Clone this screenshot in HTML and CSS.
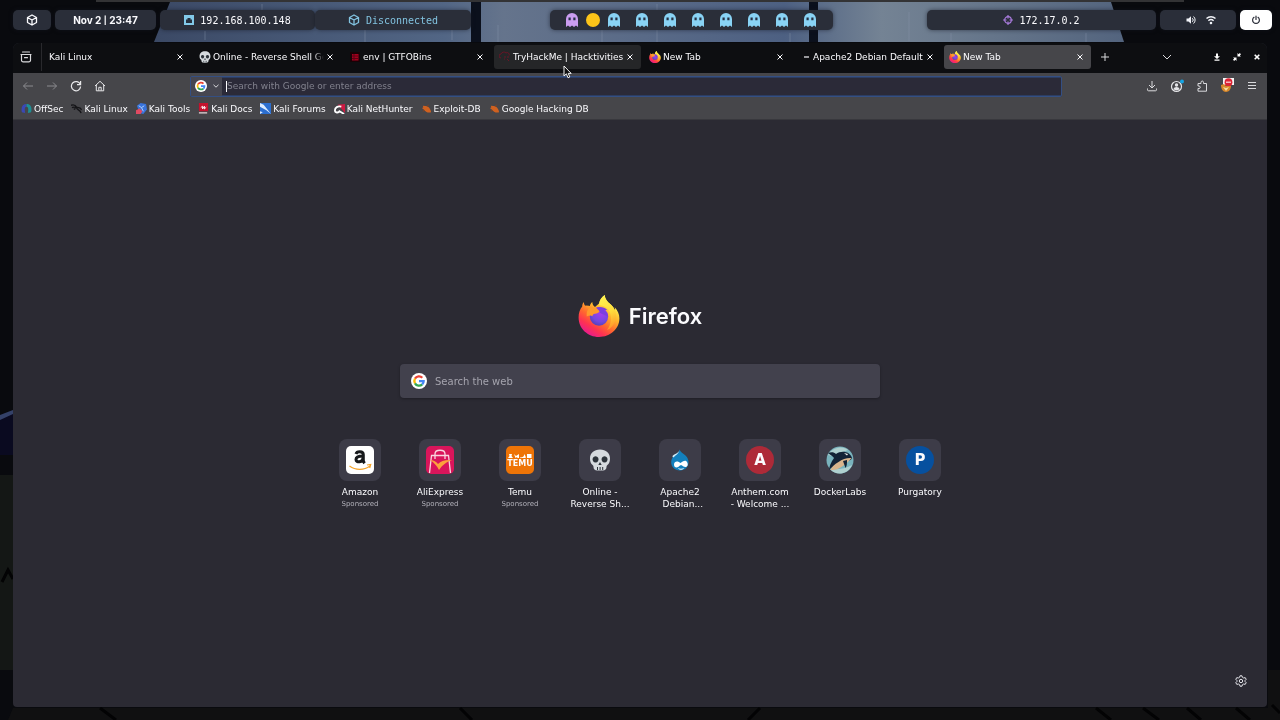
FILE: index.html
```html
<!DOCTYPE html>
<html lang="en">
<head>
  <meta charset="UTF-8">
  <meta name="viewport" content="width=device-width, initial-scale=1.0">
  <title>New Tab</title>
  <link rel="stylesheet" href="styles.css">
</head>
<body>
  <!-- Shared icons -->
  <svg class="sprite" width="0" height="0" aria-hidden="true">
    <defs>
      <linearGradient id="foxBody" x1="0.8" y1="0.1" x2="0.25" y2="0.95">
        <stop offset="0.1" stop-color="#fff14f"></stop>
        <stop offset="0.35" stop-color="#ffb52c"></stop>
        <stop offset="0.6" stop-color="#ff6a2e"></stop>
        <stop offset="0.8" stop-color="#ff3350"></stop>
        <stop offset="1" stop-color="#e81c8c"></stop>
      </linearGradient>
      <linearGradient id="foxFlame" x1="0.4" y1="0" x2="0.6" y2="1">
        <stop offset="0" stop-color="#fff251"></stop>
        <stop offset="0.5" stop-color="#ffdd3c"></stop>
        <stop offset="1" stop-color="#ff9428"></stop>
      </linearGradient>
      <radialGradient id="foxGlobe" cx="0.6" cy="0.3" r="0.8">
        <stop offset="0" stop-color="#a83cf0"></stop>
        <stop offset="0.6" stop-color="#7548e0"></stop>
        <stop offset="1" stop-color="#4b3fae"></stop>
      </radialGradient>
    </defs>
    <symbol id="firefox" viewBox="0 0 42 42">
      <path fill="url(#foxBody)" d="M5.7 7c.2 1.500.6 2.700 1.500 3.800 1.600-.3 3.200-.2 4.600.3.4-1.700 1.200-3 2.500-4 .1 2.300 1 3.800 2.700 5l4-3.500C21.600 5 23.600 2 26.700 0c.3 4 2.300 6.500 5.800 9.200 2.200 1.700 3.700 4 4.500 6.500.2-1.200.1-2.200-.3-3.400 3 3.300 4.700 7 4.700 11C41.400 34 32.300 42 21 42S.6 33.500.6 22.500c0-4.500 1.200-8 3.600-11C4.200 9.800 4.800 8.300 5.700 7z"></path>
      <path fill="url(#foxFlame)" d="M26.700 0c.3 4 2.300 6.500 5.800 9.200 5 4.300 6.500 9.500 5 15.500-1.300 5-4 8.500-8.500 10.300 4.700-6 5.500-14 1.500-20.500-2.500-3-6-4-9.500-4.500C21.300 5.700 23.500 2.300 26.700 0z"></path>
      <circle cx="21" cy="21.500" r="9.200" fill="url(#foxGlobe)"></circle>
      <path fill="#ff9a2c" d="M7.200 10.800c2.200-.4 4.300 0 6 .9 1.800.9 3.700 1 5.600.8.9 1.700 1.800 2.700 3 3.700-1.200 1.500-2.700 2.300-4.800 2.600-1.700.3-2.400 1-2.500 2.400-1.300-.9-3.300-1.100-5.800.3-.3-4 .3-6.300 2.700-8.400-1.600-.2-3-.9-4.200-2.300z"></path>
      <path fill="#7b3fdf" d="M18 12.800c3.600-1.600 8.700-.7 11.500 2.400-1.400-.4-2.500-.4-3.500 0 2.600 1.700 4 3.500 4 6.300l-8-3.500-.6-2.200z"></path>
    </symbol>
    <symbol id="google" viewBox="0 0 18 18">
      <circle cx="9" cy="9" r="9" fill="#fff"></circle>
      <g fill="none" stroke-width="2.600">
        <path stroke="#ea4335" d="M4.500 6.400A5.200 5.200 0 0 1 12.700 5.300"></path>
        <path stroke="#fbbc05" d="M4.500 11.600A5.200 5.200 0 0 1 4.500 6.400"></path>
        <path stroke="#34a853" d="M12.600 12.800A5.200 5.200 0 0 1 4.500 11.600"></path>
        <path stroke="#4285f4" d="M9 9.200h5.200c0 1.500-.6 2.700-1.600 3.600"></path>
      </g>
    </symbol>
    <symbol id="ghost" viewBox="0 0 12 14">
      <path fill="currentColor" d="M0 6a6 6 0 0 1 12 0v8l-2-1.600L8 14l-2-1.600L4 14l-2-1.600L0 14z"></path>
      <path fill="#263043" d="M2.500 4.500h2.200v2.700H2.500zM7.300 4.500h2.200v2.700H7.300z"></path>
    </symbol>
    <symbol id="skull" viewBox="0 0 22 22">
      <path fill="#d5dade" d="M11 .5c6 0 10 3.700 10 9 0 3-.8 5-2.300 6.200-.8.700-1.200 1-1.200 2.300 0 2-1.400 3.500-3.500 3.500H8c-2.100 0-3.500-1.500-3.500-3.500 0-1.300-.4-1.600-1.200-2.300C1.800 14.500 1 12.500 1 9.500c0-5.300 4-9 10-9z"></path>
      <path fill="#2c333a" d="M6.500 7.200a3 3.200 0 1 0 .1 0zM15.500 7.200a3 3.200 0 1 0 .1 0zM11 13l1.700 3h-3.400zM8 18h1v3H8zM10.600 18h1v3h-1zM13.200 18h1v3h-1z"></path>
    </symbol>
    <symbol id="cube" viewBox="0 0 12 12">
      <path fill="none" stroke="currentColor" stroke-width="1.300" stroke-linejoin="round" d="M6 1l4.500 2.500v5L6 11 1.500 8.500v-5zM1.500 3.500L6 6l4.500-2.500M6 6v5"></path>
    </symbol>
    <symbol id="close" viewBox="0 0 8 8">
      <path fill="none" stroke="currentColor" d="M1.500 1.500l5 5M6.500 1.500l-5 5"></path>
    </symbol>
    <symbol id="exploit" viewBox="0 0 12 12">
      <path fill="#cf6120" d="M2 3l3 .3C8 3.500 10.500 6 11 10c-3 1-6 0-8-3L1 5.500l1.500-.6z"></path>
      <path stroke="#8d4017" fill="none" d="M4 8l-2 1M7 4l1-2"></path>
    </symbol>
  </svg>

  <!-- Wallpaper showing behind the bar and round the window -->
  <svg class="wallpaper" viewBox="0 0 1280 720" preserveAspectRatio="none" aria-hidden="true">
    <defs>
      <linearGradient id="sky" x1="0" x2="1">
        <stop offset="0" stop-color="#3b4965"></stop>
        <stop offset="0.3" stop-color="#526685"></stop>
        <stop offset="0.36" stop-color="#65748c"></stop>
        <stop offset="0.65" stop-color="#4d6082"></stop>
        <stop offset="0.75" stop-color="#748394"></stop>
        <stop offset="1" stop-color="#53647e"></stop>
      </linearGradient>
    </defs>
    <path fill="#090a0e" d="M0 0h1280v720H0z"></path>
    <path fill="#333335" d="M96 0h1088v2H96z"></path>
    <path fill="url(#sky)" d="M170 2h941l13 40H154z"></path>
    <path fill="#0b101c" d="M471 2h10v40h-10zM809 2h9v40h-9z"></path>
    <path stroke="#8795a8" stroke-opacity="0.45" d="M205 31v9M262 4v6M365 30v12M452 26v14M498 25v17M602 30v12M657 4v38M790 33v9M909 12v29M951 33v8M1086 33v9"></path>
    <path fill="#0a0a20" d="M0 418l13-5v42H0z"></path>
    <path fill="#344168" d="M0 415l13-5v4L0 420z"></path>
    <path fill="#141715" d="M0 475h13v195H0z"></path>
    <path fill="#101011" d="M13 708h1267v12H8zM1268 670h12v50h-12z"></path>
    <path stroke="#030304" stroke-width="3" fill="none" d="M2 582l6-12 5 9M100 708l16 12M460 708l12 12M760 708l-12 12M1096 708l15 12M1143 708l16 12M1187 708l14 12M1236 708l14 12M1272 705l8 8"></path>
  </svg>

  <div class="desktop">
    <div class="bar">
      <div class="bar-left">
        <button class="pill pill-menu" aria-label="Menu"><svg width="12" height="12"><use href="#cube"></use></svg></button>
        <div class="pill pill-clock">Nov 2 <span>|</span> 23:47</div>
        <div class="network">
          <div class="pill pill-ip">
            <svg width="10" height="10" viewBox="0 0 10 10">
              <path fill="#82c9e8" d="M0 0h10v10H0z"></path>
              <path fill="#26313f" d="M2 8V4.500h1.500V3h3v1.500H8V8z"></path>
            </svg>
            <span>192.168.100.148</span>
          </div>
          <div class="pill pill-vpn">
            <svg width="12" height="12"><use href="#cube"></use></svg>
            <span>Disconnected</span>
          </div>
        </div>
      </div>

      <div class="pill workspaces">
        <button class="ghost current" aria-label="Workspace 1"><svg width="12" height="14"><use href="#ghost"></use></svg></button>
        <span class="dot"></span>
        <button class="ghost" aria-label="Workspace 2"><svg width="12" height="14"><use href="#ghost"></use></svg></button>
        <button class="ghost" aria-label="Workspace 3"><svg width="12" height="14"><use href="#ghost"></use></svg></button>
        <button class="ghost" aria-label="Workspace 4"><svg width="12" height="14"><use href="#ghost"></use></svg></button>
        <button class="ghost" aria-label="Workspace 5"><svg width="12" height="14"><use href="#ghost"></use></svg></button>
        <button class="ghost" aria-label="Workspace 6"><svg width="12" height="14"><use href="#ghost"></use></svg></button>
        <button class="ghost" aria-label="Workspace 7"><svg width="12" height="14"><use href="#ghost"></use></svg></button>
        <button class="ghost" aria-label="Workspace 8"><svg width="12" height="14"><use href="#ghost"></use></svg></button>
        <button class="ghost" aria-label="Workspace 9"><svg width="12" height="14"><use href="#ghost"></use></svg></button>
      </div>

      <div class="bar-right">
        <div class="pill pill-target">
          <svg width="10" height="10" viewBox="0 0 10 10" fill="none" stroke="#a87bdc" stroke-width="1.200">
            <circle cx="5" cy="5" r="3.300"></circle>
            <path d="M5 0v3.500M5 6.500V10M0 5h3.500M6.500 5H10"></path>
          </svg>
          <span>172.17.0.2</span>
        </div>
        <div class="pill pill-tray">
          <svg width="10" height="10" viewBox="0 0 10 10" fill="none" stroke="#f1f3f8">
            <path fill="#f1f3f8" stroke="none" d="M.5 3.500h2L5 1.200v7.600L2.500 6.500h-2z"></path>
            <path d="M6.300 3.200a2.400 2.400 0 0 1 0 3.600M7.500 1.500a4.600 4.600 0 0 1 0 7"></path>
          </svg>
          <svg width="10" height="10" viewBox="0 0 10 10" fill="none" stroke="#f1f3f8" stroke-width="1.400">
            <path d="M.5 3.500a6.500 6.500 0 0 1 9 0M2.400 5.700a3.800 3.800 0 0 1 5.200 0"></path>
            <circle cx="5" cy="8" r="0.600"></circle>
          </svg>
        </div>
        <button class="pill pill-power" aria-label="Power">
          <svg width="10" height="10" viewBox="0 0 10 10" fill="none" stroke="#2a2d38" stroke-width="1.200" stroke-linecap="round">
            <path d="M5 1v3.500M3 2.300a3.400 3.400 0 1 0 4 0"></path>
          </svg>
        </button>
      </div>
    </div>

    <div class="window">
      <div class="tab-strip">
        <button class="firefox-view" aria-label="Firefox View">
          <svg width="12" height="12" viewBox="0 0 12 12" fill="none" stroke="#dadadd" stroke-width="1.200" stroke-linecap="round">
            <path d="M2.500 1h7"></path>
            <path d="M1 3.500h10M1.500 3.500v5.800c0 .9.500 1.500 1.500 1.500h6c1 0 1.500-.6 1.500-1.500V3.500M4.500 6.700h3"></path>
          </svg>
        </button>
        <div class="tabs">
          <div class="tab">
            <span class="tab-label">Kali Linux</span>
            <button class="tab-close" aria-label="Close tab"><svg width="8" height="8"><use href="#close"></use></svg></button>
          </div>
          <div class="tab">
            <svg class="favicon" width="12" height="12"><use href="#skull"></use></svg>
            <span class="tab-label fade">Online - Reverse Shell Ge</span>
            <button class="tab-close" aria-label="Close tab"><svg width="8" height="8"><use href="#close"></use></svg></button>
          </div>
          <div class="tab">
            <svg class="favicon" width="12" height="12" viewBox="0 0 12 12">
              <path fill="#180206" d="M1 1h10v10H1z"></path>
              <path fill="#a5001e" d="M3 3h6.500v6.500H3z"></path>
              <path stroke="#5d0012" d="M3 5h6M3 7.500h6M5 3v6"></path>
            </svg>
            <span class="tab-label">env | GTFOBins</span>
            <button class="tab-close" aria-label="Close tab"><svg width="8" height="8"><use href="#close"></use></svg></button>
          </div>
          <div class="tab hovered">
            <svg class="favicon" width="12" height="12" viewBox="0 0 12 12" fill="none" stroke="#6b1426">
              <path d="M2 7a2 2 0 0 1 0-4 3 3 0 0 1 5-1 2 2 0 0 1 3 2.500M5 6h2M8 6h2M5 8h1M8 8l2 2"></path>
            </svg>
            <span class="tab-label">TryHackMe | Hacktivities</span>
            <button class="tab-close" aria-label="Close tab"><svg width="8" height="8"><use href="#close"></use></svg></button>
          </div>
          <div class="tab">
            <svg class="favicon" width="12" height="12"><use href="#firefox"></use></svg>
            <span class="tab-label">New Tab</span>
            <button class="tab-close" aria-label="Close tab"><svg width="8" height="8"><use href="#close"></use></svg></button>
          </div>
          <div class="tab">
            <svg class="favicon" width="12" height="12" viewBox="0 0 12 12"><path fill="#98989c" d="M5 5h5v2H5z"></path></svg>
            <span class="tab-label">Apache2 Debian Default</span>
            <button class="tab-close" aria-label="Close tab"><svg width="8" height="8"><use href="#close"></use></svg></button>
          </div>
          <div class="tab active">
            <svg class="favicon" width="12" height="12"><use href="#firefox"></use></svg>
            <span class="tab-label">New Tab</span>
            <button class="tab-close" aria-label="Close tab"><svg width="8" height="8"><use href="#close"></use></svg></button>
          </div>
        </div>
        <button class="new-tab" aria-label="New tab">
          <svg width="10" height="10" viewBox="0 0 10 10" stroke="#dadadd"><path d="M5 1v8M1 5h8"></path></svg>
        </button>
        <div class="window-controls">
          <button class="all-tabs" aria-label="List all tabs">
            <svg width="10" height="10" viewBox="0 0 10 10" fill="none" stroke="#dadadd"><path d="M1 3l4 4 4-4"></path></svg>
          </button>
          <button aria-label="Minimize">
            <svg width="8" height="8" viewBox="0 0 8 8"><path fill="#fff" d="M3 .5h2v2.700h2L4 6 1 3.200h2zM1.500 6.500h5v1.200h-5z"></path></svg>
          </button>
          <button aria-label="Restore">
            <svg width="8" height="8" viewBox="0 0 8 8"><path fill="#fff" d="M4.500 0v3.500H8L6.800 2.400 8 1.200 6.800 0 5.700 1.200zM3.500 8V4.500H0l1.200 1.100L0 6.800 1.200 8l1.100-1.200z"></path></svg>
          </button>
          <button aria-label="Close window">
            <svg width="8" height="8" viewBox="0 0 8 8" stroke="#fff" stroke-width="1.600"><path d="M1.700 1.700l4.600 4.600M6.300 1.700L1.700 6.300"></path></svg>
          </button>
        </div>
      </div>

      <div class="toolbar">
        <div class="nav-buttons">
          <button aria-label="Back" disabled>
            <svg width="12" height="12" viewBox="0 0 12 12" fill="none" stroke="#8b8b8f"><path d="M11 6H1.500M5 2.500L1.500 6 5 9.500"></path></svg>
          </button>
          <button aria-label="Forward" disabled>
            <svg width="12" height="12" viewBox="0 0 12 12" fill="none" stroke="#8b8b8f"><path d="M1 6h9.500M7 2.500L10.500 6 7 9.500"></path></svg>
          </button>
          <button aria-label="Reload">
            <svg width="12" height="12" viewBox="0 0 12 12" fill="none" stroke="#e8e8ea" stroke-width="1.200"><path d="M10.300 4.500A4.600 4.600 0 1 0 10.600 6.500M10.600 1v3.700H7"></path></svg>
          </button>
          <button aria-label="Home">
            <svg width="12" height="12" viewBox="0 0 12 12" fill="none" stroke="#e8e8ea" stroke-linejoin="round"><path d="M1 6l5-4.700L11 6M2.300 5v5.800h7.400V5M4.800 10.500V7.300h2.400v3.200"></path></svg>
          </button>
        </div>
        <div class="urlbar">
          <button class="engine" aria-label="Search engine: Google">
            <svg width="12" height="12"><use href="#google"></use></svg>
            <svg width="6" height="6" viewBox="0 0 6 6" fill="none" stroke="#dadadd"><path d="M.5 1.800L3 4.200l2.500-2.400"></path></svg>
          </button>
          <div class="url-field">
            <span class="caret"></span>
            <input type="text" aria-label="Address" placeholder="Search with Google or enter address">
          </div>
        </div>
        <div class="tool-buttons">
          <button aria-label="Downloads">
            <svg width="12" height="12" viewBox="0 0 12 12" fill="none" stroke="#dadadd"><path d="M6 1v7M3 5l3 3 3-3M1.500 8.500v1.300c0 .6.300 1 1 1h7c.7 0 1-.4 1-1V8.500"></path></svg>
          </button>
          <button aria-label="Account">
            <svg width="14" height="14" viewBox="0 0 14 14">
              <circle cx="6.500" cy="7.500" r="5" fill="none" stroke="#e4e4e7" stroke-width="1.200"></circle>
              <circle cx="6.500" cy="6" r="1.700" fill="#e4e4e7"></circle>
              <path fill="#e4e4e7" d="M3.500 10.300c.3-3.200 5.700-3.200 6 0-1.600 1.500-4.400 1.500-6 0z"></path>
              <circle cx="12" cy="2.500" r="2" fill="#15a5e5"></circle>
            </svg>
          </button>
          <button aria-label="Extensions">
            <svg width="12" height="12" viewBox="0 0 12 12" fill="none" stroke="#dadadd" stroke-linejoin="round"><path d="M2 11.200V8.500h1c1.800 0 1.800-2.500 0-2.500H2V3.500h3V2.300c0-1.700 2.500-1.700 2.500 0v1.200h3v7.700z"></path></svg>
          </button>
          <button aria-label="FoxyProxy">
            <svg width="14" height="16" viewBox="0 0 14 16">
              <path fill="#f5f5f5" d="M3 0h11v7H3z"></path>
              <path fill="#d8872a" d="M1 7l3-1 2 2 3-2 2 2c0 3-2 6-5 6S1 11 1 7z"></path>
              <path fill="#f7dd9b" d="M3 9l3 1 3-1-3 4z"></path>
              <circle cx="8.500" cy="4.200" r="3.900" fill="#dc2434"></circle>
              <path stroke="#f5b8bc" stroke-width="1.500" d="M6 4.200h5"></path>
            </svg>
          </button>
          <button aria-label="Application menu">
            <svg width="12" height="12" viewBox="0 0 12 12" stroke="#dadadd"><path d="M2 2.500h8M2 5.500h8M2 8.500h8"></path></svg>
          </button>
        </div>
      </div>

      <nav class="bookmarks">
        <a href="#">
          <svg width="11" height="11" viewBox="0 0 12 12"><path fill="#3a48b5" d="M1 10C-.5 4 2 1 6 1v3C3.500 4 4 8 4.500 11z"></path><path fill="#1d8f94" d="M11 10c1.500-6-1-9-5-9v3c2.500 0 2 4 1.500 7z"></path></svg>
          OffSec
        </a>
        <a href="#">
          <svg width="11" height="11" viewBox="0 0 12 12" fill="none" stroke="#151518" stroke-width="1.500"><path d="M0 2.500c3-1 5 0 6 2l4 1 1.500 2M1 5c2-1 3-.5 5 0 0 3 4 2 5 6M3 7l2-1"></path></svg>
          Kali Linux
        </a>
        <a href="#">
          <svg width="11" height="11" viewBox="0 0 12 12"><path fill="#3873db" d="M1 3l4-3 6 1 1 6-4 5-4-1z"></path><path fill="#e04a62" d="M0 8l4-2 3 3-2 3H0z"></path><path stroke="#b9d5ff" fill="none" d="M3 3l3 2 3-2M6 5l2 4"></path></svg>
          Kali Tools
        </a>
        <a href="#">
          <svg width="11" height="11" viewBox="0 0 12 12"><path fill="#c4122d" d="M1 0h10v9H1z"></path><path fill="#e9d7da" d="M1 10h9v1.500H1z"></path><path stroke="#fff" fill="none" d="M3 5l2-1.500v3l2-3v3L9 4.500"></path></svg>
          Kali Docs
        </a>
        <a href="#">
          <svg width="11" height="11" viewBox="0 0 12 12"><path fill="#2c6fd0" d="M0 0h12v12H0z"></path><path fill="#dcebff" d="M0 0l4 2 8 10-5-4L0 4zM0 9l3 1-3 2z"></path></svg>
          Kali Forums
        </a>
        <a href="#">
          <svg width="11" height="11" viewBox="0 0 12 12"><path fill="#cd1942" d="M4 2l8-1v10L7 5z"></path><path fill="none" stroke="#fff" stroke-width="2" d="M8 4C4 3 1 5 1 8c0 3 4 3 5 1l5 3"></path></svg>
          Kali NetHunter
        </a>
        <a href="#"><svg width="11" height="11"><use href="#exploit"></use></svg>Exploit-DB</a>
        <a href="#"><svg width="11" height="11"><use href="#exploit"></use></svg>Google Hacking DB</a>
      </nav>

      <main class="newtab">
        <div class="brand">
          <svg width="42" height="42"><use href="#firefox"></use></svg>
          <span>Firefox</span>
        </div>

        <form class="search">
          <svg width="16" height="16"><use href="#google"></use></svg>
          <input type="search" aria-label="Search the web" placeholder="Search the web">
        </form>

        <div class="top-sites">
          <a class="site" href="#">
            <span class="tile">
              <svg width="28" height="28" viewBox="0 0 28 28">
                <rect width="28" height="28" rx="5" fill="#fff"></rect>
                <path fill="none" stroke="#17191c" stroke-width="3" d="M10 8c.8-3 7.300-3.200 7.300.7v5.500c0 1.300.5 2 1.300 3M17 9.900c-4.300 0-7 1-7 3.600 0 3.600 7 3 7-1.500"></path>
                <path fill="none" stroke="#f5a327" stroke-width="1.200" d="M3.500 20c6 4.500 14.500 4.500 20.500 0M21 19l3.700-.5-1 3.500"></path>
              </svg>
            </span>
            <span class="site-name">Amazon</span>
            <span class="sponsored">Sponsored</span>
          </a>
          <a class="site" href="#">
            <span class="tile">
              <svg width="28" height="28" viewBox="0 0 28 28">
                <rect width="28" height="28" rx="5" fill="#d9155b"></rect>
                <path fill="none" stroke="#f9d5df" stroke-width="1.300" d="M3.500 27l2-17.500h17l2 17.500M9 13V8c0-5 10-5 10 0v5"></path>
                <path fill="#fca33b" d="M4 14c3 0 6 1.500 8 4 3-3 7-4.500 14-4-6 2-9.500 5-13 10-2-4-5-7.500-9-10z"></path>
              </svg>
            </span>
            <span class="site-name">AliExpress</span>
            <span class="sponsored">Sponsored</span>
          </a>
          <a class="site" href="#">
            <span class="tile">
              <span class="letter-icon temu">
                <svg width="24" height="6" viewBox="0 0 24 6" fill="#fff"><path d="M0 5l1.500-2L1 1h3l-.5 2L5 5zM6 1l2 2 3-2v4H9.500L9 4 7.500 5zM12 4.500c3 0 4-1 4.500-3.500L18 4.500 17 5h-5zM19 1h4.500v4H19z"></path></svg>
                TEMU
              </span>
            </span>
            <span class="site-name">Temu</span>
            <span class="sponsored">Sponsored</span>
          </a>
          <a class="site" href="#">
            <span class="tile"><svg width="22" height="22"><use href="#skull"></use></svg></span>
            <span class="site-name">Online -<br>Reverse Sh...</span>
          </a>
          <a class="site" href="#">
            <span class="tile">
              <svg width="22" height="22" viewBox="0 0 22 22">
                <path fill="#1380bd" d="M10.500.5c1 3 3.500 3.500 6 6 6 6 2.500 15-5.500 15S-.5 13.500 4.500 7C7 4.500 10 4 10.500.5z"></path>
                <path fill="#d9f0fb" d="M10 2c-.5 3-3.500 4-5.500 6.500L3.300 7.200C5 5 9 4.500 10 2z"></path>
                <path fill="#fff" d="M5 15.500c0-3.500 4-4 6.500-1.500 2-1.500 5-3.500 6.500-1s.5 5-1.500 5c-2 0-3-1.500-4.500-2-2 1-3 2.500-4.500 2.500S5 17.500 5 15.500z"></path>
                <path fill="none" stroke="#fff" d="M9.500 19.500c1.500 1 3.500 1 5 0"></path>
              </svg>
            </span>
            <span class="site-name">Apache2<br>&nbsp;&nbsp;Debian...</span>
          </a>
          <a class="site" href="#">
            <span class="tile"><span class="letter-icon red">A</span></span>
            <span class="site-name">Anthem.com<br>- Welcome ...</span>
          </a>
          <a class="site" href="#">
            <span class="tile">
              <svg width="28" height="28" viewBox="0 0 28 28">
                <circle cx="14" cy="14" r="13.500" fill="#79b3bd"></circle>
                <path fill="#afd0cf" d="M2 9c5-9 16-9 20-5L6 10zM4 23c7 1 15 0 22-4-4 10-17 11-22 4z"></path>
                <path fill="#132336" d="M2 7c3-1 6-1 8 1 5-4 14-3 16 4-1 3-5 3-7 2l1 6-4-4c-4 2-8 3-13 8 1-6 3-9 5-12-1-2-4-3-6-5z"></path>
                <path fill="#d8b48c" d="M25.500 12c-4-.5-9 1-13 4-4 2-7 5-8 8 7 1 15-5 21-12z"></path>
                <path fill="#f3f3ed" d="M18 7l4 1-1 1.500z"></path>
                <path fill="#132336" d="M17 15l4-1c0 3 0 6-1.500 8z"></path>
              </svg>
            </span>
            <span class="site-name">DockerLabs</span>
          </a>
          <a class="site" href="#">
            <span class="tile"><span class="letter-icon blue">P</span></span>
            <span class="site-name">Purgatory</span>
          </a>
        </div>

        <button class="settings" aria-label="Personalize new tab">
          <svg width="12" height="12" viewBox="0 0 12 12" fill="none" stroke="#e4e4ea" stroke-linejoin="round">
            <path d="M5 .8h2l.4 1.500 1.300.7 1.500-.4 1 1.700L10.100 5.400v1.200l1.100 1.100-1 1.700-1.500-.4-1.300.7L7 11.200H5l-.4-1.500L3.300 9l-1.500.4-1-1.700 1.100-1.100V5.400L.8 4.300l1-1.700 1.500.4 1.300-.7z"></path>
            <circle cx="6" cy="6" r="1.700"></circle>
          </svg>
        </button>
      </main>
    </div>
  </div>

  <!-- Mouse pointer -->
  <svg class="pointer" width="9" height="14" viewBox="0 0 9 14" aria-hidden="true">
    <path fill="#111" stroke="#f2f2f2" d="M1 1v10l2.400-2.200L5 12.800l1.800-.8-1.600-3.600h3z"></path>
  </svg>
</body>
</html>
```

FILE: styles.css
```css
* {
  margin: 0;
  padding: 0;
  box-sizing: border-box;
}

body {
  font-family: "DejaVu Sans", sans-serif;
  font-size: 9px;
  background-color: #090a0e;
  color: #fbfbfe;
}

button {
  display: flex;
  align-items: center;
  justify-content: center;
  background: none;
  border: none;
  color: inherit;
  font: inherit;
}

input {
  background: none;
  border: none;
  outline: none;
  color: inherit;
  font: inherit;
}

a {
  color: inherit;
  text-decoration: none;
}

svg {
  flex-shrink: 0;
}

.sprite {
  position: absolute;
}

.wallpaper {
  position: fixed;
  top: 0;
  left: 0;
  width: 100%;
  height: 100%;
  z-index: -1;
}

.desktop {
  display: flex;
  flex-direction: column;
  gap: 13px;
  min-height: 100vh;
  padding: 10px 8px 13px 13px;
}

/* Status bar */
.bar {
  display: grid;
  grid-template-columns: 11fr auto 9fr;
  height: 20px;
}

.bar-left,
.bar-right,
.network {
  display: flex;
}

.bar-left {
  gap: 4px;
}

.bar-right {
  gap: 4px;
  justify-content: flex-end;
}

.pill {
  display: flex;
  align-items: center;
  justify-content: center;
  gap: 6px;
  height: 20px;
  border-radius: 5px;
  background-color: #2a2e39;
  box-shadow: 0 0 4px rgba(20, 24, 34, 0.6);
  font-family: "DejaVu Sans Mono", monospace;
  font-size: 10px;
  white-space: pre;
}

.pill-menu {
  width: 38px;
}

.pill-clock {
  gap: 0;
  width: 101px;
  font-family: Inter, sans-serif;
  font-weight: 700;
}

.pill-clock span {
  font-size: 8px;
}

.pill-ip {
  width: 155px;
}

.pill-vpn {
  width: 156px;
  color: #82c3e0;
}

.workspaces {
  gap: 8px;
  width: 283px;
}

.ghost {
  color: #89d3f5;
}

.ghost.current {
  color: #cb9df0;
}

.ghost + .ghost {
  margin-left: 8px;
}

.dot {
  width: 14px;
  height: 14px;
  border-radius: 50%;
  background-color: #fcc419;
}

.pill-target {
  width: 229px;
}

.pill-tray {
  gap: 10px;
  width: 76px;
  padding-left: 5px;
}

.pill-power {
  width: 32px;
  background-color: #fff;
}

/* Browser window */
.window {
  display: flex;
  flex-direction: column;
  flex: 1;
  margin-right: 5px;
  border-radius: 6px 6px 4px 4px;
  background-color: #2b2a33;
  overflow: hidden;
}

.tab-strip {
  display: flex;
  align-items: center;
  height: 30px;
  padding: 0 2px 2px 0;
  background-color: #0d0e11;
}

.firefox-view {
  width: 29px;
  height: 28px;
  padding-right: 2px;
  border-right: 1px solid #29292d;
}

.tabs {
  display: flex;
  flex: 0 1 1047px;
  gap: 3px;
  min-width: 0;
  margin-left: 2px;
}

.tab {
  display: flex;
  align-items: center;
  gap: 2px;
  flex: 1;
  min-width: 0;
  height: 24px;
  padding: 0 7px 0 5px;
  border-radius: 3px;
}

.tab.hovered {
  background-color: #252628;
}

.tab.active {
  background-color: #46464a;
}

.tab-label {
  flex: 1;
  min-width: 0;
  white-space: nowrap;
}

.tab-label.fade {
  mask-image: linear-gradient(to right, #000 90%, transparent);
}

.new-tab {
  width: 20px;
  height: 20px;
  margin-left: 4px;
}

.window-controls {
  display: flex;
  align-items: center;
  gap: 4px;
  margin-left: auto;
}

.window-controls button {
  width: 16px;
  height: 16px;
}

.window-controls .all-tabs {
  margin-right: 30px;
}

.toolbar {
  display: flex;
  align-items: center;
  height: 26px;
  padding: 0 9px;
  background-color: #46464a;
}

.nav-buttons,
.tool-buttons {
  display: flex;
  align-items: center;
  gap: 12px;
}

.nav-buttons button,
.tool-buttons button {
  width: 12px;
  height: 20px;
}

.tool-buttons {
  gap: 13px;
}

.urlbar {
  display: flex;
  flex: 1;
  height: 21px;
  margin: 0 84px;
  border: 1px solid #344f83;
  border-radius: 2px;
  background-color: #2b2a38;
}

.engine {
  gap: 6px;
  width: 31px;
  background-color: #464650;
}

.url-field {
  display: flex;
  align-items: center;
  flex: 1;
  padding-left: 4px;
  border: solid #2c3d62;
  border-width: 1px 0;
}

.caret {
  width: 1px;
  height: 11px;
  background-color: #fbfbfe;
}

.url-field input {
  flex: 1;
  height: 17px;
}

.url-field input::placeholder {
  color: #81818d;
}

.bookmarks {
  display: flex;
  align-items: center;
  gap: 8px;
  height: 21px;
  padding: 0 8px 1px;
  border-bottom: 1px solid #38383d;
  background-color: #46464a;
}

.bookmarks a {
  display: flex;
  align-items: center;
  gap: 2px;
  white-space: nowrap;
}

/* New tab page */
.newtab {
  display: flex;
  flex-direction: column;
  align-items: center;
  flex: 1;
  padding: 175px 20px 20px;
}

.brand {
  display: flex;
  align-items: center;
  gap: 9px;
  font-family: Inter, sans-serif;
  font-size: 22px;
  font-weight: 600;
}

.search {
  display: flex;
  align-items: center;
  gap: 8px;
  width: 100%;
  max-width: 480px;
  height: 34px;
  margin-top: 27px;
  padding: 0 11px;
  border-radius: 4px;
  background-color: #42414d;
  box-shadow: 0 1px 3px rgba(0, 0, 0, 0.3);
  font-size: 10px;
}

.search input {
  flex: 1;
  height: 30px;
}

.search input::placeholder {
  color: #a5a4ae;
}

.top-sites {
  display: flex;
  flex-wrap: wrap;
  justify-content: center;
  gap: 16px;
  margin-top: 41px;
}

.site {
  display: flex;
  flex-direction: column;
  align-items: center;
  width: 64px;
  line-height: 12px;
  text-align: center;
  white-space: nowrap;
}

.tile {
  display: flex;
  align-items: center;
  justify-content: center;
  width: 42px;
  height: 42px;
  margin-bottom: 5px;
  border-radius: 8px;
  background-color: #3d3c48;
}

.letter-icon {
  display: flex;
  align-items: center;
  justify-content: center;
  width: 28px;
  height: 28px;
  border-radius: 50%;
  font-size: 15px;
  font-weight: 700;
}

.letter-icon.red {
  background-color: #ae2a38;
}

.letter-icon.blue {
  background-color: #06509f;
}

.letter-icon.temu {
  flex-direction: column;
  border-radius: 5px;
  background-color: #ee7407;
  font-size: 8px;
  line-height: 9px;
}

.sponsored {
  color: #b0afb8;
  font-size: 7px;
}

.settings {
  width: 12px;
  height: 12px;
  margin-top: auto;
  align-self: flex-end;
}

/* Floats over whatever is below it */
.pointer {
  position: absolute;
  top: 65px;
  left: 563px;
}
```
